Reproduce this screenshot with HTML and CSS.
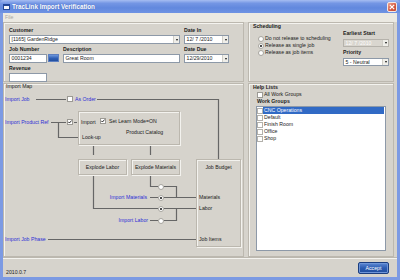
FILE: index.html
```html
<!DOCTYPE html>
<html>
<head>
<meta charset="utf-8">
<title>TracLink Import Verification</title>
<link rel="stylesheet" href="styles.css">
</head>
<body>
<div class="window">
  <div class="titlebar">
    <span class="app-icon"></span>
    <span class="title">TracLink Import Verification</span>
    <span class="close"><svg width="6" height="6" viewBox="0 0 6 6"><path d="M0.8 0.8L5.2 5.2M5.2 0.8L0.8 5.2" stroke="#fff" stroke-width="1.2"/></svg></span>
  </div>
  <div class="frame">
    <div class="menubar"><span class="menu-item">File</span></div>
    <div class="main">
      <section class="panel job-panel">
        <div class="row">
          <div class="field w-customer">
            <div class="lbl">Customer</div>
            <div class="combo"><span class="val">[1165] GardenRidge</span><span class="drop"></span></div>
          </div>
          <div class="field w-date">
            <div class="lbl">Date In</div>
            <div class="combo"><span class="val">12/ 7 /2010</span><span class="drop"></span></div>
          </div>
        </div>
        <div class="row">
          <div class="field w-job">
            <div class="lbl">Job Number</div>
            <div class="job-line"><div class="input w-input">0001234</div><span class="blue-btn"></span></div>
          </div>
          <div class="field w-desc">
            <div class="lbl">Description</div>
            <div class="input">Great Room</div>
          </div>
          <div class="field w-date">
            <div class="lbl">Date Due</div>
            <div class="combo"><span class="val">12/29/2010</span><span class="drop"></span></div>
          </div>
        </div>
        <div class="row">
          <div class="field w-input">
            <div class="lbl">Revenue</div>
            <div class="input"></div>
          </div>
        </div>
      </section>

      <section class="panel sched-panel">
        <div class="panel-title">Scheduling</div>
        <div class="sched-body">
          <div class="sched-options">
            <div class="opt"><span class="rad"></span><span>Do not release to scheduling</span></div>
            <div class="opt"><span class="rad on"></span><span>Release as single job</span></div>
            <div class="opt"><span class="rad"></span><span>Release as job items</span></div>
          </div>
          <div class="sched-right">
            <div class="lbl">Earliest Start</div>
            <div class="combo disabled"><span class="val">12/ 7 /2010</span><span class="drop"></span></div>
            <div class="lbl gap">Priority</div>
            <div class="combo"><span class="val">5 - Neutral</span><span class="drop"></span></div>
          </div>
        </div>
      </section>

      <section class="panel map-panel">
        <div class="map-title">Import Map</div>
        <svg class="wires" width="241" height="174" viewBox="0 0 241 174">
          <path d="M33 16.5H63 M94 16.5H215.5V76 M48 39.5H63 M55.5 39.5V54.5H75 M71 39.5H74 M90.5 62V72 M147.5 62V72 M90.5 92V125.5H155 M147.5 92V103.5H155 M147 114.5H155 M147 137.5H155 M161 103.5H173.5V114.5 M161 114.5H193 M161 125.5H193 M173.5 125.5V137.5H161 M45 156.5H193"/>
        </svg>
        <div class="box product-box"></div>
        <div class="box explode-labor">Explode Labor</div>
        <div class="box explode-mat">Explode Materials</div>
        <div class="box job-budget">Job Budget</div>

        <span class="node link n-import-job">Import Job</span>
        <span class="chk node c-as-order"></span>
        <span class="node link n-as-order">As Order</span>

        <span class="node link n-product-ref">Import Product Ref</span>
        <span class="chk on node c-product-ref"><svg width="4" height="4" viewBox="0 0 4 4"><path d="M0.3 1.8L1.4 3L3.7 0.5" fill="none" stroke="#111" stroke-width="0.9"/></svg></span>
        <span class="node n-import">Import</span>
        <span class="chk on node c-learn"><svg width="4" height="4" viewBox="0 0 4 4"><path d="M0.3 1.8L1.4 3L3.7 0.5" fill="none" stroke="#111" stroke-width="0.9"/></svg></span>
        <span class="node n-learn">Set Learn Mode=ON</span>
        <span class="node n-catalog">Product Catalog</span>
        <span class="node n-lookup">Look-up</span>

        <span class="node link n-imp-mat">Import Materials</span>
        <span class="node link n-imp-labor">Import Labor</span>
        <span class="rad node r1"></span>
        <span class="rad on node r2"></span>
        <span class="rad on node r3"></span>
        <span class="rad node r4"></span>
        <span class="node n-materials">Materials</span>
        <span class="node n-labor">Labor</span>

        <span class="node link n-job-phase">Import Job Phase</span>
        <span class="node n-job-items">Job Items</span>
      </section>

      <section class="panel help-panel">
        <div class="panel-title">Help Lists</div>
        <div class="opt all-groups"><span class="chk"></span><span>All Work Groups</span></div>
        <div class="sub-title">Work Groups</div>
        <div class="listbox">
          <div class="li selected"><span class="chk"></span><span class="li-text">CNC Operations</span></div>
          <div class="li"><span class="chk"></span><span class="li-text">Default</span></div>
          <div class="li"><span class="chk"></span><span class="li-text">Finish Room</span></div>
          <div class="li"><span class="chk"></span><span class="li-text">Office</span></div>
          <div class="li"><span class="chk"></span><span class="li-text">Shop</span></div>
        </div>
      </section>
    </div>
    <div class="footer">
      <span class="version">2010.0.7</span>
      <button class="accept">Accept</button>
    </div>
  </div>
</div>
</body>
</html>
```

FILE: styles.css
```css
* { box-sizing: border-box; }
html, body { margin: 0; padding: 0; }
body {
  width: 400px;
  height: 280px;
  overflow: hidden;
  background: #7c9ae3;
  font-family: "Liberation Sans", Arial, sans-serif;
  font-size: 5.2px;
  line-height: 7px;
  color: #1b1b1b;
}
.window { width: 400px; height: 280px; display: flex; flex-direction: column; }

.titlebar {
  height: 13px;
  display: flex;
  align-items: center;
  padding: 0 3px;
  background: linear-gradient(180deg, #a6bdf2 0%, #7496e4 25%, #6288de 60%, #6f93e3 100%);
  border-radius: 4px 4px 0 0;
}
.app-icon {
  width: 7px; height: 6px;
  background: #f4f6fb;
  border: 1px solid #24489a;
  border-top-width: 2px;
}
.title {
  margin-left: 2px;
  font-weight: bold;
  font-size: 6.3px;
  color: #fff;
  text-shadow: 0 0 1px #3c5cb0;
}
.close {
  margin-left: auto;
  width: 10px; height: 10px;
  border: 1px solid #f3e7e4;
  border-radius: 2px;
  background: linear-gradient(135deg, #f0a593, #d4583f 60%, #c44a33);
  display: flex; align-items: center; justify-content: center;
}
.close svg { display: block; }

.frame {
  flex: 1;
  display: flex;
  flex-direction: column;
  border: 3px solid #7c9ae3;
  border-top: 0;
  background: #d6d3cc;
}
.menubar {
  height: 9px;
  background: #ebe9e2;
  padding-left: 2px;
  line-height: 9px;
  color: #aaa8a2;
}

.main {
  height: 235px;
  display: grid;
  grid-template-columns: 241px 146px;
  grid-template-rows: 60px 174px;
  column-gap: 4px;
  row-gap: 1px;
  padding-right: 3px;
}
.panel {
  box-shadow: inset 0 0 0 1px #bcb8af, inset 1px 1px 0 1px #f4f3ef;
}
.panel-title, .sub-title { font-weight: bold; }
.panel-title { line-height: 8px; height: 8px; padding-left: 5px; }

/* job panel */
.job-panel { padding: 5px 0 0 6px; display: flex; flex-direction: column; gap: 2px; }
.row { display: flex; gap: 4px; }
.field { display: flex; flex-direction: column; }
.lbl { font-weight: bold; height: 7px; line-height: 7px; margin-bottom: 1px; }
.w-customer { width: 171px; }
.w-date { width: 45px; }
.w-job { width: 50px; }
.w-desc { width: 117px; }
.w-input { width: 38px; }
.job-line { display: flex; gap: 1px; align-items: flex-start; }
.blue-btn {
  width: 11px; height: 8px;
  background: linear-gradient(180deg, #6f98dc, #2f5fb5 55%, #224f9f);
  border: 1px solid #5d7fc0;
}
.input, .combo {
  height: 9px;
  background: #fff;
  border: 1px solid #8d99a8;
  display: flex;
  align-items: center;
  padding-left: 1.5px;
  line-height: 7px;
  white-space: nowrap;
  overflow: hidden;
}
.combo .drop {
  margin-left: auto;
  width: 6px; height: 7px;
  background: #efeee9;
  border-left: 1px solid #d0cec7;
  display: flex; align-items: center; justify-content: center;
  flex: none;
}
.combo .drop::after {
  content: "";
  border-left: 1.5px solid transparent;
  border-right: 1.5px solid transparent;
  border-top: 2px solid #111;
}
.combo.disabled { background: #d9d6cf; color: #fdfdfd; border-color: #b5b2ab; }

/* scheduling */
.sched-body { display: flex; }
.sched-options { width: 95px; padding: 5px 0 0 10px; }
.opt { display: flex; align-items: center; gap: 1px; height: 7px; white-space: nowrap; }
.sched-right { width: 46px; display: flex; flex-direction: column; }
.sched-right .lbl { margin-bottom: 2px; }
.sched-right .lbl.gap { margin-top: 2px; }
.sched-right .combo { height: 8px; }

.chk {
  width: 6px; height: 6px;
  flex: none;
  background: #fff;
  border: 1px solid #9c9a94;
  display: flex; align-items: center; justify-content: center;
}
.chk svg { display: block; }
.rad {
  width: 6px; height: 6px;
  flex: none;
  background: #fff;
  border: 1px solid #a6a49e;
  border-radius: 50%;
  display: flex; align-items: center; justify-content: center;
}
.rad.on::after {
  content: "";
  width: 2px; height: 2px;
  border-radius: 50%;
  background: #111;
}

/* map */
.map-panel { position: relative; }
.map-title { position: absolute; left: 3px; top: 0; }
.wires { position: absolute; left: 0; top: 0; }
.wires path { fill: none; stroke: #666; stroke-width: 1.2; }
.box {
  position: absolute;
  border: 1px solid #bbb7ae;
  box-shadow: inset 1px 1px 0 #f3f2ee, 1px 1px 0 #f3f2ee;
  text-align: center;
  white-space: nowrap;
}
.product-box { left: 75px; top: 28px; width: 102px; height: 34px; }
.explode-labor { left: 75px; top: 76px; width: 49px; height: 16px; line-height: 14px; }
.explode-mat { left: 128px; top: 76px; width: 49px; height: 16px; line-height: 14px; }
.job-budget { left: 193px; top: 76px; width: 45px; height: 88px; line-height: 14px; }

.node { position: absolute; white-space: nowrap; line-height: 7px; }
.link { color: #2f2fd6; }
.n-import-job { left: 2px; top: 12.5px; }
.c-as-order { left: 64px; top: 13px; }
.n-as-order { left: 72px; top: 12.5px; }
.n-product-ref { left: 2px; top: 35.5px; }
.c-product-ref { left: 64px; top: 36px; }
.n-import { left: 78px; top: 35.5px; }
.c-learn { left: 97px; top: 35px; }
.n-learn { left: 106px; top: 34.5px; }
.n-catalog { left: 123px; top: 45.5px; }
.n-lookup { left: 79px; top: 50.5px; }
.n-imp-mat { right: 97px; top: 110.5px; }
.n-imp-labor { right: 96px; top: 133.5px; }
.r1 { left: 155px; top: 100.5px; }
.r2 { left: 155px; top: 111.5px; }
.r3 { left: 155px; top: 122.5px; }
.r4 { left: 155px; top: 134.5px; }
.n-materials { left: 196px; top: 110.5px; }
.n-labor { left: 196px; top: 121.5px; }
.n-job-phase { left: 2px; top: 152.5px; }
.n-job-items { left: 196px; top: 152.5px; }

/* help lists */
.help-panel { display: flex; flex-direction: column; }
.all-groups { margin-left: 9px; }
.sub-title { margin-left: 9px; height: 7px; }
.listbox {
  margin: 1px 0 0 8px;
  width: 130px;
  height: 145px;
  background: #fff;
  border: 1px solid #8d99a8;
}
.li { display: flex; align-items: center; height: 7px; padding-left: 0; margin-right: 1px; }
.li .chk { border-color: #b3b1ab; }
.li-text { flex: 1; padding-left: 1px; height: 7px; }
.li.selected .li-text { background: #316ac5; color: #fff; }

/* footer */
.footer {
  height: 20px;
  display: flex;
  align-items: flex-start;
  justify-content: space-between;
  padding: 5px 8px 0 3px;
  box-shadow: inset 0 1px 0 #bcb8af, inset 0 2px 0 #f4f3ef;
}
.version { margin-top: 6.5px; }
.accept {
  width: 31px; height: 12px;
  padding: 0;
  font-family: inherit;
  font-size: 5.2px;
  color: #fff;
  background: linear-gradient(180deg, #5f8ad4, #2c5cb2 50%, #1f4c9c);
  border: 1px solid #1b3e80;
  border-radius: 2px;
  box-shadow: inset 0 0 0 1px #6e95d8;
}
```
